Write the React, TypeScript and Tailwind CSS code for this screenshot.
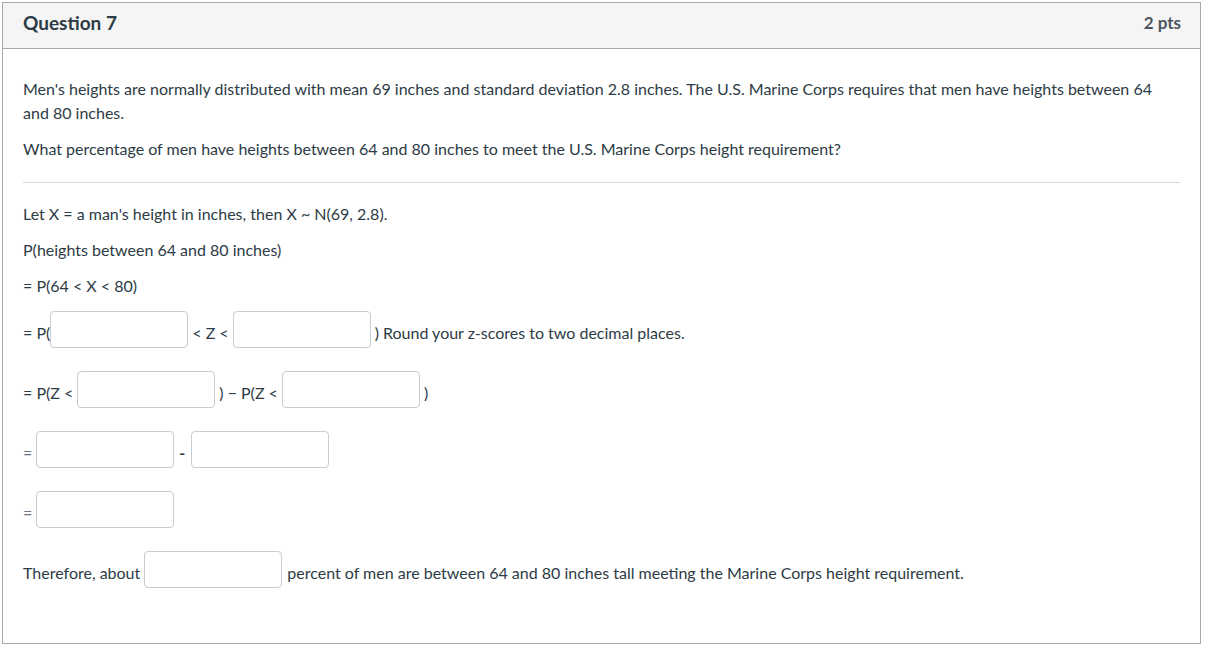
import React from "react";

function Blank({ className = "" }: { className?: string }) {
  return (
    <span
      className={
        "inline-block h-[37px] w-[138px] shrink-0 rounded-[4px] border border-[#c7cdd1] bg-white " +
        className
      }
    />
  );
}

export default function App() {
  return (
    <div className="min-h-[660px] bg-white pl-[2px] pt-[2px] font-['Lato','Liberation_Sans',sans-serif] text-[16px] leading-[24px] text-[#2d3b45]">
      <div className="w-[1199px] border border-[#a9a9a9]">
        <div className="flex h-[46px] items-center justify-between border-b border-[#a9a9a9] bg-[#f5f5f5] pb-[5px] pl-[20px] pr-[19px]">
          <h2 className="text-[19px] font-bold">Question 7</h2>
          <span className="text-[17px] font-bold text-[#4a555d]">2 pts</span>
        </div>

        <div className="px-[20px] pt-[28px] pb-[55px]">
          <p>
            Men's heights are normally distributed with mean 69 inches and standard deviation 2.8
            inches. The U.S. Marine Corps requires that men have heights between 64 and 80 inches.
          </p>
          <p className="mt-[12px]">
            What percentage of men have heights between 64 and 80 inches to meet the U.S. Marine
            Corps height requirement?
          </p>

          <hr className="mt-[21px] border-t border-[#d7dbdf]" />

          <p className="mt-[19px]">Let X = a man's height in inches, then X ~ N(69, 2.8).</p>
          <p className="mt-[12px]">P(heights between 64 and 80 inches)</p>
          <p className="mt-[12px]">= P(64 &lt; X &lt; 80)</p>

          <div className="mt-[13px] flex h-[37px] items-center">
            <span className="mt-[6px]">= P(</span>
            <Blank />
            <span className="mx-[4px] mt-[6px]">&lt; Z &lt;</span>
            <Blank />
            <span className="ml-[4px] mt-[6px]">) Round your z-scores to two decimal places.</span>
          </div>

          <div className="mt-[23px] flex h-[37px] items-center">
            <span className="mt-[6px]">= P(Z &lt;</span>
            <Blank className="ml-[4px]" />
            <span className="mx-[4px] mt-[6px]">) − P(Z &lt;</span>
            <Blank />
            <span className="ml-[4px] mt-[6px]">)</span>
          </div>

          <div className="mt-[23px] flex h-[37px] items-center">
            <span className="mt-[6px] text-[#6b7780]">=</span>
            <Blank className="ml-[4px]" />
            <span className="ml-[5px] mr-[6px] mt-[6px] font-bold">-</span>
            <Blank />
          </div>

          <div className="mt-[23px] flex h-[37px] items-center">
            <span className="mt-[6px] text-[#6b7780]">=</span>
            <Blank className="ml-[4px]" />
          </div>

          <div className="mt-[23px] flex h-[37px] items-center">
            <span className="mt-[6px]">Therefore, about</span>
            <Blank className="ml-[4px]" />
            <span className="ml-[5px] mt-[6px]">
              percent of men are between 64 and 80 inches tall meeting the Marine Corps height
              requirement.
            </span>
          </div>
        </div>
      </div>
    </div>
  );
}
